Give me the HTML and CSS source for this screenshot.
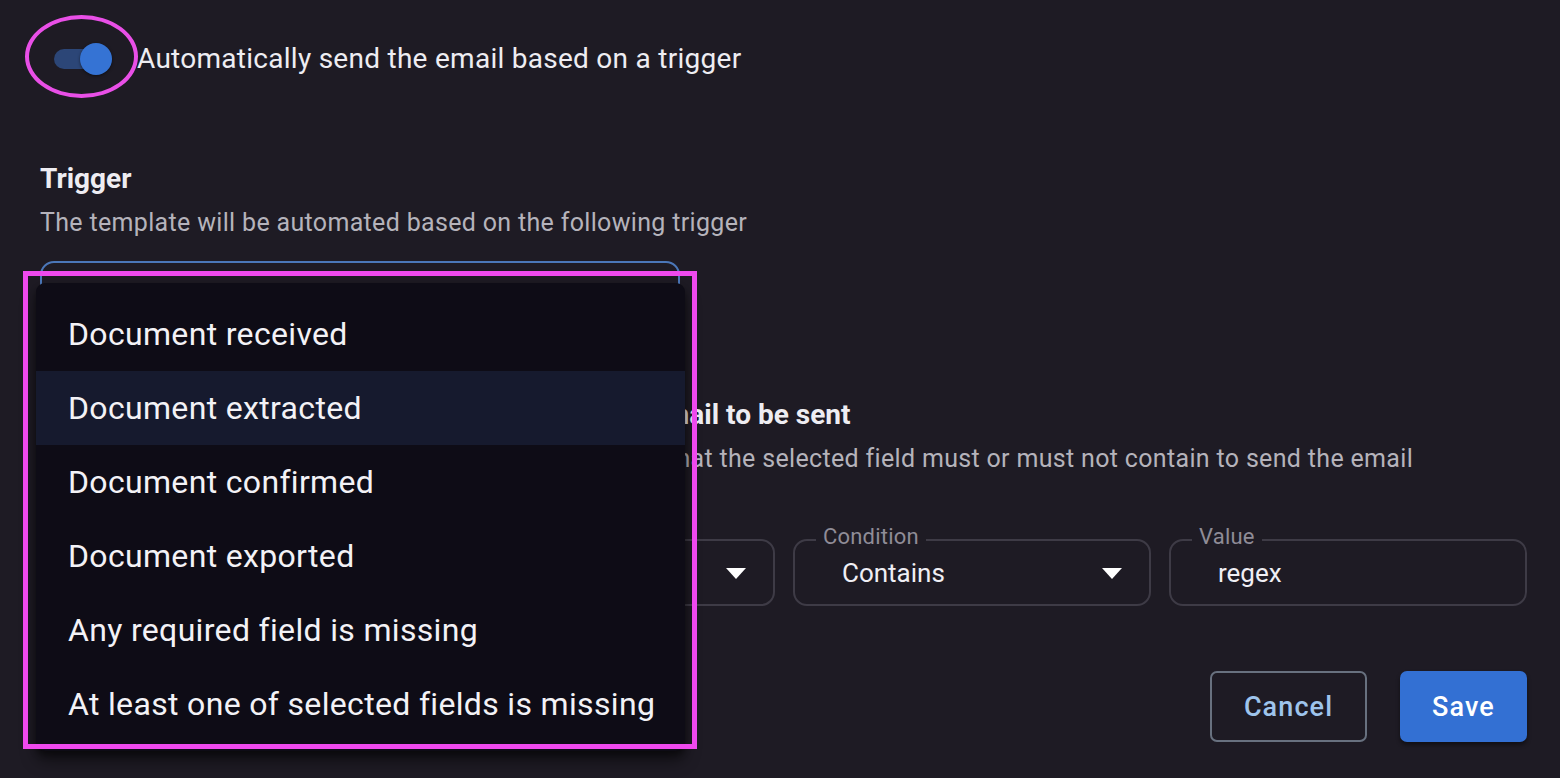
FILE: index.html
```html
<!DOCTYPE html>
<html lang="en">
<head>
<meta charset="utf-8">
<title>Email automation</title>
<link rel="stylesheet" href="styles.css">
</head>
<body>
<div class="page">
  <div class="switch-row">
    <span class="switch"><span class="switch-track"></span><span class="switch-thumb"></span></span>
    <span class="switch-label">Automatically send the email based on a trigger</span>
  </div>

  <h2 class="section-title trigger-title">Trigger</h2>
  <p class="section-sub">The template will be automated based on the following trigger</p>
  <div class="select-open"></div>

  <h2 class="section-title cond-title">Define the conditions which must be met for the email to be sent</h2>
  <p class="section-sub">Enter the exact value, or the regular expression pattern that the selected field must or must not contain to send the email</p>

  <div class="fields">
    <div class="field">
      <span class="field-label">Field</span>
      <span class="field-value">Document number</span>
      <span class="arrow"></span>
    </div>
    <div class="field">
      <span class="field-label">Condition</span>
      <span class="field-value">Contains</span>
      <span class="arrow"></span>
    </div>
    <div class="field">
      <span class="field-label">Value</span>
      <span class="field-value">regex</span>
    </div>
  </div>

  <div class="actions">
    <button class="btn btn-outline">Cancel</button>
    <button class="btn btn-primary">Save</button>
  </div>
</div>

<ul class="menu">
  <li class="menu-item">Document received</li>
  <li class="menu-item is-active">Document extracted</li>
  <li class="menu-item">Document confirmed</li>
  <li class="menu-item">Document exported</li>
  <li class="menu-item">Any required field is missing</li>
  <li class="menu-item">At least one of selected fields is missing</li>
</ul>

<div class="mark-ellipse"></div>
<div class="mark-rect"></div>
</body>
</html>
```

FILE: styles.css
```css
* { box-sizing: border-box; }

html, body {
  margin: 0;
  padding: 0;
  background: #1e1b24;
  color: #eeedf2;
  font-family: Roboto, "Noto Sans", "Liberation Sans", sans-serif;
  height: 778px;
  overflow: hidden;
}

.page {
  padding: 37px 33px 0 40px;
}

.switch-row {
  display: flex;
  align-items: center;
  height: 44px;
  gap: 25px;
}

.switch {
  position: relative;
  width: 58px;
  height: 32px;
  margin-left: 14px;
  flex: none;
}

.switch-track {
  position: absolute;
  left: 0;
  top: 6px;
  width: 56px;
  height: 20px;
  border-radius: 10px;
  background: #2c4677;
}

.switch-thumb {
  position: absolute;
  right: 0;
  top: 0;
  width: 32px;
  height: 32px;
  border-radius: 50%;
  background: #3573d4;
  box-shadow: 0 1px 3px rgba(0, 0, 0, 0.5);
}

.switch-label {
  font-size: 28px;
  letter-spacing: 0.27px;
  line-height: 44px;
}

.section-title {
  margin: 0;
  font-size: 28px;
  font-weight: 700;
  line-height: 36px;
}

.trigger-title { margin-top: 80px; }
.cond-title { margin-top: 69px; }

.section-sub {
  margin: 9px 0 0;
  font-size: 25px;
  line-height: 34px;
  letter-spacing: 0.33px;
  color: #b5b3bb;
}

.select-open {
  margin-top: 21px;
  width: 640px;
  height: 67px;
  border: 2px solid #4b77b9;
  border-radius: 14px;
}

.fields {
  margin-top: 63px;
  display: grid;
  grid-template-columns: 1fr 358px 358px;
  gap: 18px;
}

.field {
  position: relative;
  height: 67px;
  border: 2px solid #3e3b46;
  border-radius: 14px;
  display: flex;
  align-items: center;
  padding-left: 47px;
  font-size: 26px;
}

.field-label {
  position: absolute;
  left: 21px;
  top: -18px;
  padding: 0 7px;
  background: #1e1b24;
  font-size: 22px;
  line-height: 28px;
  color: #8f8c97;
  letter-spacing: 0.2px;
}

.field-value {
  color: #f0eff4;
}

.arrow {
  position: absolute;
  right: 27px;
  top: 27px;
  width: 0;
  height: 0;
  border-left: 10px solid transparent;
  border-right: 10px solid transparent;
  border-top: 11px solid #ffffff;
}

.actions {
  margin-top: 65px;
  display: flex;
  justify-content: flex-end;
  gap: 33px;
}

.btn {
  height: 71px;
  border-radius: 7px;
  font-family: Roboto, "Noto Sans", "Liberation Sans", sans-serif;
  font-size: 27px;
  font-weight: 500;
  letter-spacing: 1.1px;
  cursor: pointer;
}

.btn-outline {
  width: 157px;
  background: transparent;
  border: 2px solid #68717f;
  color: #9ec4ec;
}

.btn-primary {
  width: 127px;
  background: #3370d3;
  border: none;
  color: #ffffff;
  box-shadow: 0 3px 4px rgba(0, 0, 0, 0.45);
}

.menu {
  position: absolute;
  left: 36px;
  top: 283px;
  width: 649px;
  margin: 0;
  padding: 14px 0 10px;
  list-style: none;
  background: #0e0c16;
  border-radius: 9px;
  box-shadow: 0 10px 16px rgba(0, 0, 0, 0.45), 0 4px 6px rgba(0, 0, 0, 0.4);
}

.menu-item {
  height: 74px;
  display: flex;
  align-items: center;
  padding-left: 32px;
  font-size: 32px;
  letter-spacing: 0.33px;
  color: #f3f2f6;
}

.menu-item.is-active {
  background: #161a2e;
}

.mark-ellipse {
  position: absolute;
  left: 25px;
  top: 15px;
  width: 113px;
  height: 83px;
  border: 4px solid #e94fe7;
  border-radius: 50%;
}

.mark-rect {
  position: absolute;
  left: 23px;
  top: 271px;
  width: 674px;
  height: 478px;
  border: 5px solid #ef49ee;
}
```
